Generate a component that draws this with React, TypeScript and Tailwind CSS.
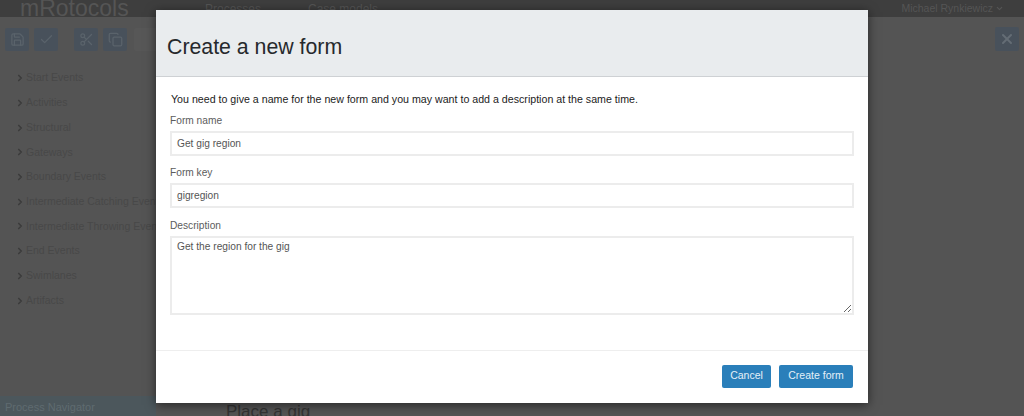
import { ChevronDown, ChevronRight, Save, Check, Scissors, Copy, X } from "lucide-react";

const SIDEBAR_ITEMS = [
  "Start Events",
  "Activities",
  "Structural",
  "Gateways",
  "Boundary Events",
  "Intermediate Catching Events",
  "Intermediate Throwing Events",
  "End Events",
  "Swimlanes",
  "Artifacts",
];

const TOOLS = [
  { icon: Save, gap: "" },
  { icon: Check, gap: "ml-[5px]" },
  { icon: Scissors, gap: "ml-[16px]" },
  { icon: Copy, gap: "ml-[5px]" },
];

function Field({ label, value }: { label: string; value: string }) {
  return (
    <div className="flex flex-col">
      <label className="text-[10.2px] leading-[18px] text-[#5c5c5c]">{label}</label>
      <div className="mt-[1px] flex h-[25px] items-center border-2 border-[#ececec] bg-white px-[5px] text-[10.2px] text-[#555]">
        {value}
      </div>
    </div>
  );
}

export default function App() {
  return (
    <div className="relative flex h-[416px] w-[1024px] flex-col overflow-hidden bg-[#545454] font-['Liberation_Sans',Arial,sans-serif]">
      {/* Page behind the dialog */}
      <header className="flex h-[17px] flex-shrink-0 items-center overflow-hidden bg-[#3e3e3e] text-[#555]">
        <span className="ml-[20px] w-[185px] text-[23px] leading-none">mRotocols</span>
        <span className="w-[103px] text-[12px]">Processes</span>
        <span className="text-[12px]">Case models</span>
        <span className="mr-[20px] ml-auto flex items-center gap-[2px] text-[10.5px]">
          Michael Rynkiewicz
          <ChevronDown className="h-[9px] w-[9px]" strokeWidth={3} />
        </span>
      </header>

      <div className="flex items-center justify-between px-[5px] pt-[10px]">
        <div className="flex">
          {TOOLS.map(({ icon: Icon, gap }, i) => (
            <div key={i} className={`flex h-[23px] w-[24px] items-center justify-center rounded-[2px] bg-[#48515b] text-[#5a636b] ${gap}`}>
              <Icon className="h-[15px] w-[15px]" />
            </div>
          ))}
          <div className="ml-[7px] h-[23px] w-[24px] rounded-[2px] bg-[#575757]" />
        </div>
        <div className="flex h-[24px] w-[24px] items-center justify-center rounded-[2px] bg-[#48515b] text-[#646d75]">
          <X className="h-[16px] w-[16px]" strokeWidth={3} />
        </div>
      </div>

      <nav className="mt-[15px] flex flex-col pl-[15px]">
        {SIDEBAR_ITEMS.map((item) => (
          <div key={item} className="flex h-[24.7px] items-center gap-[1px] text-[10.5px] whitespace-nowrap text-[#484848]">
            <ChevronRight className="h-[10px] w-[10px] text-[#3c3c3c]" strokeWidth={4} />
            {item}
          </div>
        ))}
      </nav>

      <div className="mt-auto flex h-[20px] items-center">
        <div className="h-full w-[156px] bg-[#4c575c] pt-[3px] pl-[5px] text-[11px] text-[#5f6b70]">Process Navigator</div>
        <span className="mt-[12px] ml-[70px] text-[17px] text-[#333]">Place a gig</span>
      </div>

      {/* Dialog */}
      <div className="absolute top-[10px] left-[156px] flex h-[393px] w-[712px] flex-col bg-white shadow-[0_2px_10px_rgba(0,0,0,0.55)]">
        <div className="flex h-[67px] flex-shrink-0 items-center border-b border-[#ced1d4] bg-[#e9ecee] pt-[9px] pl-[11px]">
          <h1 className="text-[21.3px] leading-none font-normal text-[#26292c]">Create a new form</h1>
        </div>

        <div className="flex flex-1 flex-col px-[14px] pt-[15px]">
          <p className="pl-[1px] text-[10.65px] leading-[14px] text-[#222]">
            You need to give a name for the new form and you may want to add a description at the same time.
          </p>
          <div className="mt-[6px] flex flex-col gap-[8px]">
            <Field label="Form name" value="Get gig region" />
            <Field label="Form key" value="gigregion" />
            <div className="mt-[1px] flex flex-col">
              <label className="text-[10.2px] leading-[18px] text-[#5c5c5c]">Description</label>
              <textarea
                readOnly
                value="Get the region for the gig"
                className="mt-[1px] h-[79px] w-full border-2 border-[#ececec] bg-white px-[5px] py-[2px] text-[10.2px] leading-[14px] text-[#555] outline-none"
              />
            </div>
          </div>
        </div>

        <div className="flex h-[53px] flex-shrink-0 items-center justify-end gap-[8px] border-t border-[#eeeeee] pr-[15px] pb-[2px]">
          <button className="h-[23px] w-[49px] rounded-[2px] bg-[#2a7fba] text-[10.5px] text-[#e4f0f8]">Cancel</button>
          <button className="h-[23px] w-[74px] rounded-[2px] bg-[#2a7fba] text-[10.5px] text-[#e4f0f8]">Create form</button>
        </div>
      </div>
    </div>
  );
}
